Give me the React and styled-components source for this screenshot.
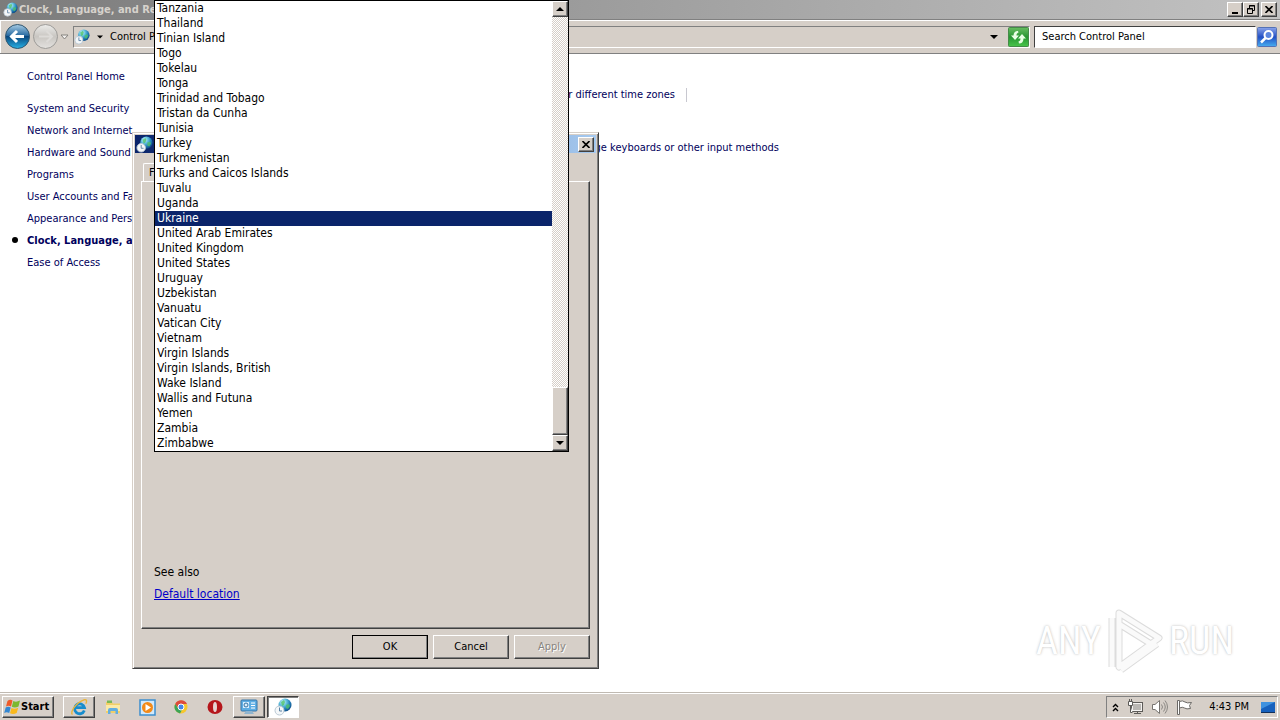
import React from "react";
import styled, { createGlobalStyle, css } from "styled-components";

const face = "#d6cfc8";
const ui = '"DejaVu Sans Condensed", "Open Sans", sans-serif';

const raised = css`
  border: 1px solid;
  border-color: #ffffff #404040 #404040 #ffffff;
  box-shadow: inset -1px -1px 0 #808080;
`;

const GlobalStyle = createGlobalStyle`
  * { box-sizing: border-box; }
  body { margin: 0; background: #ffffff; color: #000000; font: 11px/14px ${ui}; }
  button, input, select { font: inherit; color: inherit; margin: 0; }
  svg { display: block; flex: none; }
`;

const Desktop = styled.div`
  position: relative;
  display: flex;
  flex-direction: column;
  min-height: 100vh;
  overflow: hidden;
`;

const TitleBar = styled.header`
  display: flex;
  align-items: center;
  gap: 1px;
  height: 19px;
  padding: 0 3px;
  color: #d6d2cc;
  background: linear-gradient(90deg, #7c7c7c, #c2c2c2);
`;

const Title = styled.h1`
  flex: 1;
  margin: 0;
  font: 700 11px/18px ${ui};
  white-space: nowrap;
`;

const CaptionButtons = styled.div`
  display: flex;
`;

const CaptionButton = styled.button`
  ${raised}
  display: grid;
  place-items: center;
  width: 16px;
  height: 15px;
  margin-left: ${(p) => (p.$spaced ? "2px" : "0")};
  padding: 0;
  background: ${face};
`;

const Toolbar = styled.div`
  display: flex;
  align-items: center;
  gap: 4px;
  height: 35px;
  padding: 0 3px 0 4px;
  background: ${face};
  border-top: 1px solid #808080;
  border-bottom: 1px solid #808080;
  box-shadow: inset 1px 1px 0 #ffffff;
`;

const PlainButton = styled.button`
  display: grid;
  place-items: center;
  padding: 0;
  border: 0;
  background: none;
`;

const NavButtons = styled.div`
  display: flex;
  align-items: center;
  gap: 1px;
`;

const AddressBar = styled.div`
  display: flex;
  flex: 1;
  align-items: center;
  gap: 7px;
  height: 22px;
  border: 1px solid;
  border-color: #808080 #ffffff #ffffff #808080;
  white-space: nowrap;
`;

const Crumb = styled.span`
  flex: 1;
`;

const AddressActions = styled.div`
  display: flex;
  align-items: center;
  gap: 10px;
`;

const SearchInput = styled.input`
  width: 222px;
  height: 22px;
  padding: 0 7px;
  background: #ffffff;
  border: 1px solid;
  border-color: #404040 #ffffff #ffffff #404040;
  border-radius: 0;
  outline: 0;
  &::placeholder { color: #000000; opacity: 1; }
`;

const SearchGroup = styled.div`
  display: flex;
  align-items: center;
  gap: 1px;
`;

const Body = styled.div`
  display: flex;
  flex: 1;
`;

const Nav = styled.nav`
  width: 200px;
  padding: 12px 0 0 27px;
`;

const NavList = styled.ul`
  margin: 10px 0 0;
  padding: 0;
  list-style: none;
`;

const NavItem = styled.li`
  position: relative;
  ${(p) => p.$current && css`
    font-weight: 700;
    &::before {
      content: "";
      position: absolute;
      left: -15px;
      top: 7px;
      width: 6px;
      height: 6px;
      border-radius: 50%;
      background: #000000;
    }
  `}
`;

const Link = styled.a`
  display: block;
  color: #00005c;
  line-height: 22px;
  text-decoration: none;
  white-space: nowrap;
`;

const Tasks = styled.main`
  width: 579px;
  padding: 34px 0 0;
`;

const TaskRow = styled.div`
  display: flex;
  justify-content: flex-end;
  margin-bottom: 35px;
  padding-right: ${(p) => (p.$divided ? "92px" : "0")};
`;

const Task = styled(Link)`
  padding-right: ${(p) => (p.$divided ? "11px" : "0")};
  border-right: ${(p) => (p.$divided ? "1px solid #c8c8d0" : "0")};
  line-height: ${(p) => (p.$divided ? "14px" : "22px")};
`;

const Dialog = styled.section`
  position: absolute;
  left: 132px;
  top: 132px;
  display: flex;
  flex-direction: column;
  width: 467px;
  height: 537px;
  padding: 2px 8px 9px;
  background: ${face};
  border: 1px solid;
  border-color: #d6cfc8 #404040 #404040 #d6cfc8;
  box-shadow: inset 1px 1px 0 #ffffff, inset -1px -1px 0 #808080;
`;

const DialogTitle = styled.div`
  display: flex;
  align-items: center;
  justify-content: space-between;
  height: 18px;
  margin: 0 -6px;
  padding: 0 2px 0 1px;
  background: linear-gradient(90deg, #0a246a, #a6caf0);
`;

const Tabs = styled.div`
  display: flex;
  padding: 10px 0 0 2px;
`;

const Tab = styled.button`
  width: 60px;
  height: 18px;
  padding: 0 0 0 5px;
  text-align: left;
  background: ${face};
  border: 1px solid;
  border-color: #ffffff #404040 transparent #ffffff;
  border-bottom: 0;
  border-radius: 2px 2px 0 0;
`;

const TabPanel = styled.div`
  display: flex;
  flex: 1;
  flex-direction: column;
  justify-content: flex-end;
  align-items: flex-start;
  gap: 8px;
  padding: 0 12px 27px;
  ${raised}
  font-size: 12px;
`;

const DialogLink = styled.a`
  color: #0000c8;
`;

const DialogButtons = styled.div`
  display: flex;
  justify-content: flex-end;
  gap: 5px;
  padding-top: 6px;
`;

const PushButton = styled.button`
  width: 76px;
  height: 24px;
  padding: 0;
  background: ${face};
  ${raised}
  outline: ${(p) => (p.$isDefault ? "1px solid #000000" : "0")};
  outline-offset: -1px;
  &:disabled { color: #88847e; text-shadow: 1px 1px 0 #ffffff; }
`;

const Popup = styled.div`
  position: absolute;
  left: 154px;
  top: 0;
  display: flex;
  width: 415px;
  border: 1px solid #000000;
  background: #ffffff;
`;

const LocationSelect = styled.select`
  flex: 1;
  height: 450px;
  padding: 0;
  border: 0;
  border-radius: 0;
  outline: 0;
  background: #ffffff;
  font-size: 12px;
  overflow: hidden;
  scrollbar-width: none;

  option {
    height: 15px;
    min-height: 15px;
    padding: 0 2px;
    color: #000000;
  }
  option:checked {
    color: #ffffff;
    background: linear-gradient(#0a246a, #0a246a);
  }
`;

const ScrollTrack = styled.div`
  display: flex;
  flex-direction: column;
  width: 16px;
  background: repeating-conic-gradient(#ffffff 0 25%, #d6cfc8 0 50%) 0 0 / 2px 2px;
`;

const ScrollButton = styled.button`
  ${raised}
  display: grid;
  place-items: center;
  height: 16px;
  padding: 0;
  background: ${face};
`;

const ScrollThumb = styled.div`
  ${raised}
  height: 48px;
  margin-top: auto;
  background: ${face};
`;

const Taskbar = styled.footer`
  display: flex;
  align-items: center;
  height: 28px;
  padding: 1px 2px 0;
  background: ${face};
  border-top: 1px solid #c0bab2;
  box-shadow: inset 0 1px 0 #ffffff;
`;

const StartButton = styled.button`
  ${raised}
  display: flex;
  align-items: center;
  width: 52px;
  height: 22px;
  padding: 0 1px;
  background: ${face};
  font-weight: 700;
`;

const TaskButtons = styled.div`
  display: flex;
  flex: 1;
  gap: 2px;
  padding-left: 9px;
`;

const TaskButton = styled.button`
  display: grid;
  place-items: center;
  width: 32px;
  height: 22px;
  padding: 0;
  background: ${(p) => (p.$state === "active" ? "#ffffff" : face)};
  border: 1px solid transparent;
  ${(p) => p.$state === "open" && raised}
  ${(p) => p.$state === "active" && css`
    border-color: #404040 #ffffff #ffffff #404040;
    box-shadow: inset 1px 1px 0 #808080;
  `}
`;

const Tray = styled.div`
  display: flex;
  align-items: center;
  gap: 8px;
  height: 22px;
  padding: 0 1px 0 5px;
  border: 1px solid;
  border-color: #808080 #ffffff #ffffff #808080;
`;

const Clock = styled.time`
  padding: 0 3px 0 8px;
`;

const Watermark = styled.div`
  position: absolute;
  right: 46px;
  bottom: 47px;
  display: flex;
  align-items: center;
  gap: 4px;
  color: #ffffff;
  font: 38px/60px "Liberation Sans Narrow", "Roboto Condensed", "Liberation Sans", sans-serif;
  text-shadow: 0 0 3px #c4c4c4, 0 0 1px #dcdcdc;
`;

const GlobeClock = ({ size = 18 }) => (
  <svg width={size} height={size} viewBox="0 0 18 18" aria-hidden="true">
    <defs>
      <radialGradient id="globe" cx="35%" cy="28%" r="75%">
        <stop offset="0" stopColor="#d8f8ff" />
        <stop offset=".35" stopColor="#66c3e0" />
        <stop offset=".7" stopColor="#2380b8" />
        <stop offset="1" stopColor="#0d4c88" />
      </radialGradient>
    </defs>
    <circle cx="11" cy="7" r="6.500" fill="url(#globe)" />
    <path d="M7 4l3-2 1 2-1 3-2 1zM12 7l3-1 1 2-2 3-2-1z" fill="#4fc26a" opacity=".8" />
    <circle cx="5.500" cy="12.500" r="4.500" fill="#f4f7f9" stroke="#b9c8d3" />
    <path d="M5.500 9.500V13h2.500" fill="none" stroke="#5d82a3" />
  </svg>
);

const Arrow = ({ color, muted }) => (
  <svg width="27" height="27" viewBox="0 0 27 27" aria-hidden="true">
    <defs>
      <linearGradient id="backFill" x1="0" y1="0" x2="0" y2="1">
        <stop offset="0" stopColor="#a8cce4" />
        <stop offset=".45" stopColor="#2b6da4" />
        <stop offset=".5" stopColor="#0a477e" />
        <stop offset="1" stopColor="#27b2e6" />
      </linearGradient>
      <linearGradient id="forwardFill" x1="0" y1="0" x2="0" y2="1">
        <stop offset="0" stopColor="#ececea" />
        <stop offset=".5" stopColor="#c9c6c2" />
        <stop offset="1" stopColor="#e4e2df" />
      </linearGradient>
    </defs>
    <circle cx="13.500" cy="13.500" r="12" fill={muted ? "url(#forwardFill)" : "url(#backFill)"} stroke={muted ? "#9d9b98" : "#31566f"} />
    <path
      d={muted ? "M7 13.500h13M14.500 8l5.500 5.500-5.500 5.500" : "M20 13.500H8M13 8l-5.500 5.500L13 19"}
      fill="none" stroke={color} strokeWidth={muted ? 2 : 3}
    />
  </svg>
);

const Caret = ({ up, size = 8 }) => (
  <svg width={size} height="4" viewBox="0 0 8 4" aria-hidden="true">
    <path d={up ? "M0 4L4 0l4 4z" : "M0 0h8L4 4z"} fill="#000" />
  </svg>
);

const CloseGlyph = () => (
  <svg width="8" height="7" viewBox="0 0 8 7" aria-hidden="true">
    <path d="M.5 0l7 7M7.500 0l-7 7" stroke="#000" strokeWidth="1.600" />
  </svg>
);

const MinimizeGlyph = () => (
  <svg width="8" height="8" viewBox="0 0 8 8" aria-hidden="true"><path d="M1 6h6v2H1z" /></svg>
);

const RestoreGlyph = () => (
  <svg width="9" height="9" viewBox="0 0 9 9" aria-hidden="true">
    <path d="M2.500 3V.5h5v5H6M2 1h6M.5 3.500h5v5h-5zM0 4h6" fill="none" stroke="#000" />
  </svg>
);

const RefreshIcon = () => (
  <svg width="21" height="20" viewBox="0 0 21 20" aria-hidden="true">
    <defs>
      <linearGradient id="refreshFill" x1="0" y1="0" x2="0" y2="1">
        <stop offset="0" stopColor="#69bd62" /><stop offset=".5" stopColor="#279632" /><stop offset="1" stopColor="#48c54b" />
      </linearGradient>
    </defs>
    <rect x=".5" y=".5" width="20" height="19" rx="1" fill="url(#refreshFill)" stroke="#458b48" />
    <path d="M10 4C7 4 5.500 6 5.500 8.500H3L7 13l4-4.500H8.500c0-1.500.5-2.500 2-3zM11 16.500c3 0 4.500-2 4.500-5H18L14 7l-4 4.500h2.500c0 1.500-.5 2.500-2 3z" fill="#e9ffe5" />
  </svg>
);

const SearchIcon = () => (
  <svg width="20" height="20" viewBox="0 0 20 20" aria-hidden="true">
    <defs>
      <linearGradient id="searchFill" x1="0" y1="0" x2="0" y2="1">
        <stop offset="0" stopColor="#8ba4ea" /><stop offset=".5" stopColor="#224fc4" /><stop offset="1" stopColor="#48aef0" />
      </linearGradient>
    </defs>
    <rect x=".5" y=".5" width="19" height="19" rx="1" fill="url(#searchFill)" stroke="#5572b5" />
    <circle cx="11.500" cy="8" r="4" fill="#5b86df" stroke="#fff" strokeWidth="2" />
    <path d="M8.500 11L4 15.500" stroke="#fff" strokeWidth="2.500" />
  </svg>
);

const WindowsFlag = () => (
  <svg width="17" height="16" viewBox="0 0 17 16" aria-hidden="true">
    <path d="M3.500 2q2.500-2 5-.5L7 7.500Q4.500 6 2 7.500z" fill="#ef5a28" />
    <path d="M9.300 2q3 1.500 6.700-.5L14.500 7.500q-3.500 2-6.700.3z" fill="#7cb82f" />
    <path d="M1.700 8.500q2.500-1.500 5 0L5.200 14q-2.500-1.500-5 0z" fill="#3487d2" />
    <path d="M7.500 9q3 1.500 6.700-.3L12.700 14q-3.500 2-6.700.3z" fill="#f9b91d" />
  </svg>
);

const BrowserE = () => (
  <svg width="18" height="18" viewBox="0 0 18 18" aria-hidden="true">
    <path d="M14.300 12.500A5 5 0 1 1 14.500 9.700H6" fill="none" stroke="#168ccd" strokeWidth="2.800" />
    <path d="M2.500 16.500C-.5 14.500 6 4.500 14 1.800c3-.8 3 1.500 1.800 4" fill="none" stroke="#e9b43a" strokeWidth="1.400" />
  </svg>
);

const FolderIcon = () => (
  <svg width="18" height="18" viewBox="0 0 18 18" aria-hidden="true">
    <path d="M2 4h6l1 1.500h7V15H2z" fill="#f1cf68" />
    <path d="M3 2.500h5V5H3z" fill="#79b856" />
    <path d="M2 7h14v6H2z" fill="#fbeaa7" />
    <path d="M4 16v-4q0-2 2-2h6q2 0 2 2v4h-2.500v-3h-5v3z" fill="#62aee0" />
  </svg>
);

const MediaIcon = () => (
  <svg width="17" height="17" viewBox="0 0 17 17" aria-hidden="true">
    <rect x="1" y="1" width="15" height="15" fill="#d2e9fb" stroke="#3c8fce" strokeWidth="1.500" />
    <circle cx="8.500" cy="8.500" r="5.500" fill="#f38a18" />
    <path d="M6.500 5l5.500 3.500L6.500 12z" fill="#fff" />
  </svg>
);

const ChromeIcon = () => (
  <svg width="16" height="16" viewBox="0 0 16 16" aria-hidden="true">
    <circle cx="8" cy="8" r="6.500" fill="#f6c72d" />
    <path d="M2.200 5A6.500 6.500 0 0 1 14 5H8L5.400 9.500z" fill="#dd4b3c" />
    <path d="M2.200 5L5.400 9.500 9 11l-2 3.400A6.500 6.500 0 0 1 2.200 5z" fill="#3ca457" />
    <circle cx="8" cy="8" r="3" fill="#4486e8" stroke="#fff" />
  </svg>
);

const OperaIcon = () => (
  <svg width="16" height="16" viewBox="0 0 16 16" aria-hidden="true">
    <ellipse cx="8" cy="8" rx="7.500" ry="7" fill="#b5161b" />
    <ellipse cx="8" cy="8" rx="2" ry="5" fill="#e6d4d2" />
  </svg>
);

const PanelIcon = () => (
  <svg width="18" height="16" viewBox="0 0 18 16" aria-hidden="true">
    <rect x="1" y="1" width="16" height="11" rx="1" fill="#5eaee4" stroke="#3474a8" />
    <path d="M3 3h6v6H3z" fill="#d9efff" />
    <circle cx="6" cy="6" r="2" fill="none" stroke="#35719f" />
    <path d="M11 4h4M11 6.500h4M11 9h4" stroke="#fff" />
    <path d="M6 12h6l2 3H4z" fill="#8fb4cf" />
  </svg>
);

const ChevronsIcon = () => (
  <svg width="7" height="9" viewBox="0 0 7 9" aria-hidden="true">
    <path d="M1 4l2.500-2.500L6 4M1 8l2.500-2.500L6 8" fill="none" stroke="#000" strokeWidth="1.400" />
  </svg>
);

const NetworkIcon = () => (
  <svg width="17" height="16" viewBox="0 0 17 16" aria-hidden="true">
    <rect x="4.500" y="3.500" width="11" height="9" fill="#f4f2f0" stroke="#5d5b58" />
    <path d="M6 5h8v6H6z" fill="#bab7b3" />
    <path d="M7 14.500h7M10.500 13v1" fill="none" stroke="#5d5b58" />
    <path d="M1.500 2.500h4v4h-4zM3.500 7v6.500h2M2.500 0v2M4.500 0v2" fill="#fff" stroke="#5d5b58" />
  </svg>
);

const SpeakerIcon = () => (
  <svg width="16" height="16" viewBox="0 0 16 16" aria-hidden="true">
    <path d="M.5 5.500H3L7.500 1.500v13L3 10.500H.5z" fill="#fff" stroke="#777470" />
    <path d="M9.500 5.500q2 2.500 0 5M11.500 3.500q3.500 4.500 0 9M13 1.500q5 6.500 0 13" fill="none" stroke="#8a8783" />
  </svg>
);

const FlagIcon = () => (
  <svg width="17" height="16" viewBox="0 0 17 16" aria-hidden="true">
    <path d="M1.500 1.500h2v14h-2z" fill="#fff" stroke="#6b6966" />
    <path d="M3.500 2.500q3-1.500 5.500.5 2 1.500 6.500.5l-2 3 1 3q-4 1-6-.5-2-1.500-5 0z" fill="#fff" stroke="#6b6966" />
  </svg>
);

const DesktopIcon = () => (
  <svg width="16" height="13" viewBox="0 0 16 13" aria-hidden="true">
    <path d="M1 1h14v10H1z" fill="#1761bd" />
    <path d="M1 1h14L1 8z" fill="#3f92df" />
    <path d="M1 11h14v1H1z" fill="#12305b" />
  </svg>
);

const PlayMark = () => (
  <svg width="60" height="64" viewBox="0 0 60 64" aria-hidden="true">
    <g fill="none" stroke="#dcdcdc" strokeWidth="7" strokeLinejoin="round">
      <path d="M7 9v49M14 4l40 25-40 29zM14 15l32 20M16 61l36-26" />
    </g>
    <g fill="none" stroke="#fafafa" strokeWidth="5" strokeLinejoin="round">
      <path d="M7 9v49M14 4l40 25-40 29zM14 15l32 20M16 61l36-26" />
    </g>
  </svg>
);

const countries = [
  "Tanzania", "Thailand", "Tinian Island", "Togo", "Tokelau", "Tonga",
  "Trinidad and Tobago", "Tristan da Cunha", "Tunisia", "Turkey",
  "Turkmenistan", "Turks and Caicos Islands", "Tuvalu", "Uganda", "Ukraine",
  "United Arab Emirates", "United Kingdom", "United States", "Uruguay",
  "Uzbekistan", "Vanuatu", "Vatican City", "Vietnam", "Virgin Islands",
  "Virgin Islands, British", "Wake Island", "Wallis and Futuna", "Yemen",
  "Zambia", "Zimbabwe",
];

const categories = [
  "System and Security", "Network and Internet", "Hardware and Sound",
  "Programs", "User Accounts and Family Safety",
  "Appearance and Personalization", "Clock, Language, and Region",
  "Ease of Access",
];

const current = "Clock, Language, and Region";

const taskItems = [
  { name: "Internet Explorer", icon: <BrowserE />, state: "open" },
  { name: "Windows Explorer", icon: <FolderIcon /> },
  { name: "Media Player", icon: <MediaIcon /> },
  { name: "Chrome", icon: <ChromeIcon /> },
  { name: "Opera", icon: <OperaIcon /> },
  { name: "Control Panel", icon: <PanelIcon />, state: "open" },
  { name: "Region and Language", icon: <GlobeClock />, state: "active" },
];

export default function App() {
  return (
    <Desktop>
      <GlobalStyle />
      <TitleBar>
        <GlobeClock size={15} />
        <Title>{current}</Title>
        <CaptionButtons>
          <CaptionButton aria-label="Minimize"><MinimizeGlyph /></CaptionButton>
          <CaptionButton aria-label="Restore"><RestoreGlyph /></CaptionButton>
          <CaptionButton aria-label="Close" $spaced><CloseGlyph /></CaptionButton>
        </CaptionButtons>
      </TitleBar>
      <Toolbar>
        <NavButtons>
          <PlainButton aria-label="Back"><Arrow color="#ffffff" /></PlainButton>
          <PlainButton aria-label="Forward"><Arrow color="#dddbd8" muted /></PlainButton>
          <PlainButton aria-label="Recent pages">
            <svg width="9" height="6" viewBox="0 0 9 6"><path d="M1 1h7L4.500 5z" fill="#f4f2f0" stroke="#85827e" /></svg>
          </PlainButton>
        </NavButtons>
        <AddressBar>
          <GlobeClock size={16} />
          <Caret size={6} />
          <Crumb>Control Panel</Crumb>
          <AddressActions>
            <PlainButton aria-label="Previous locations"><Caret /></PlainButton>
            <PlainButton aria-label="Refresh"><RefreshIcon /></PlainButton>
          </AddressActions>
        </AddressBar>
        <SearchGroup>
          <SearchInput type="text" placeholder="Search Control Panel" aria-label="Search Control Panel" />
          <PlainButton aria-label="Search"><SearchIcon /></PlainButton>
        </SearchGroup>
      </Toolbar>

      <Body>
        <Nav>
          <Link href="#home">Control Panel Home</Link>
          <NavList>
            {categories.map((name) => (
              <NavItem key={name} $current={name === current}>
                <Link href="#category">{name}</Link>
              </NavItem>
            ))}
          </NavList>
        </Nav>
        <Tasks>
          <TaskRow $divided>
            <Task href="#clocks" $divided>Add clocks for different time zones</Task>
          </TaskRow>
          <TaskRow>
            <Task href="#keyboards">Change keyboards or other input methods</Task>
          </TaskRow>
        </Tasks>
      </Body>

      <Taskbar>
        <StartButton><WindowsFlag />Start</StartButton>
        <TaskButtons>
          {taskItems.map((item) => (
            <TaskButton key={item.name} aria-label={item.name} $state={item.state}>{item.icon}</TaskButton>
          ))}
        </TaskButtons>
        <Tray>
          <ChevronsIcon />
          <NetworkIcon />
          <SpeakerIcon />
          <FlagIcon />
          <Clock>4:43 PM</Clock>
          <DesktopIcon />
        </Tray>
      </Taskbar>

      <Dialog role="dialog" aria-label="Region and Language">
        <DialogTitle>
          <GlobeClock size={17} />
          <CaptionButton aria-label="Close dialog"><CloseGlyph /></CaptionButton>
        </DialogTitle>
        <Tabs><Tab>Formats</Tab></Tabs>
        <TabPanel>
          <span>See also</span>
          <DialogLink href="#location">Default location</DialogLink>
        </TabPanel>
        <DialogButtons>
          <PushButton $isDefault>OK</PushButton>
          <PushButton>Cancel</PushButton>
          <PushButton disabled>Apply</PushButton>
        </DialogButtons>
      </Dialog>

      <Popup>
        <LocationSelect size={30} defaultValue="Ukraine" aria-label="Current location">
          {countries.map((name) => <option key={name}>{name}</option>)}
        </LocationSelect>
        <ScrollTrack>
          <ScrollButton aria-label="Scroll up"><Caret up /></ScrollButton>
          <ScrollThumb />
          <ScrollButton aria-label="Scroll down"><Caret /></ScrollButton>
        </ScrollTrack>
      </Popup>

      <Watermark><span>ANY</span><PlayMark /><span>RUN</span></Watermark>
    </Desktop>
  );
}
